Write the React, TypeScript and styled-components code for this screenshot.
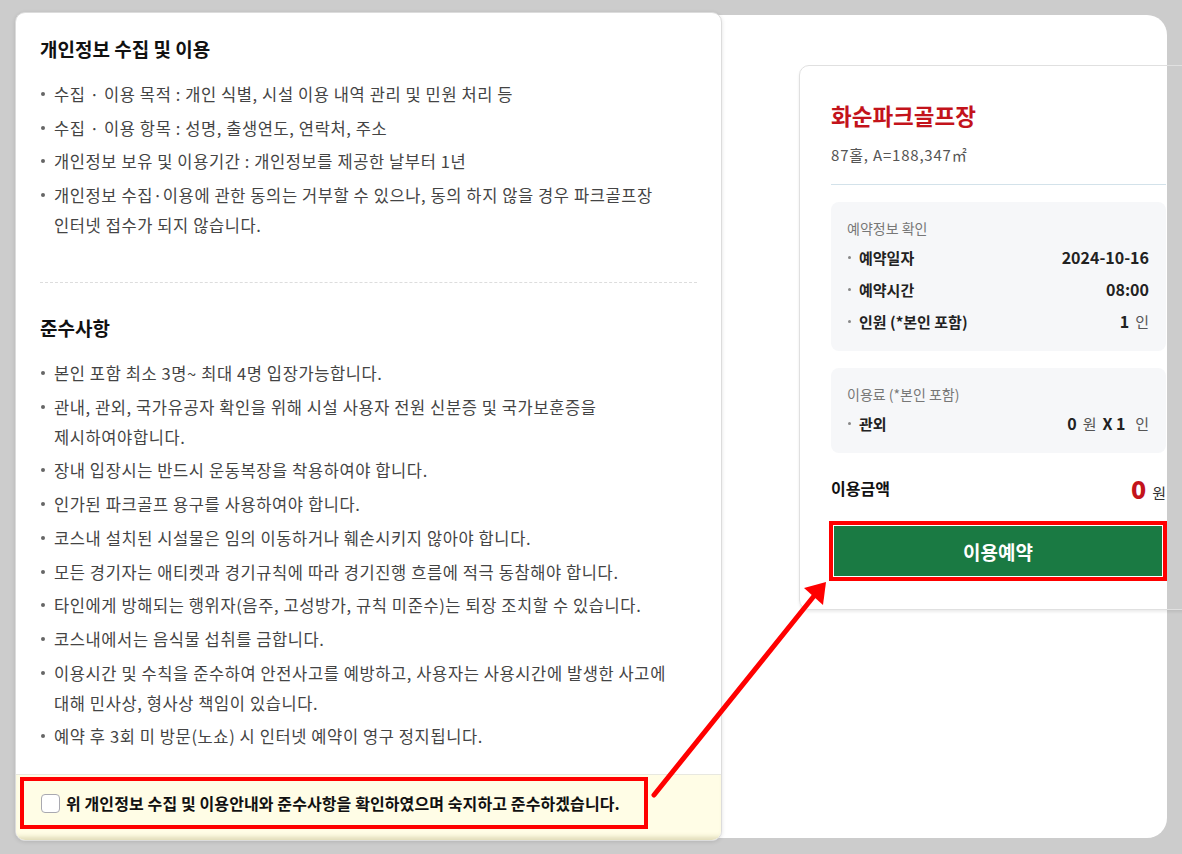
import React from 'react';
import styled, { createGlobalStyle } from 'styled-components';

const GlobalStyle = createGlobalStyle`
  html, body {
    margin: 0;
    padding: 0;
    background: #cccccc;
    overflow: hidden;
  }
  * {
    box-sizing: border-box;
  }
  body {
    font-family: 'Noto Sans CJK KR', 'Noto Sans', sans-serif;
    color: #222;
  }
`;

const Page = styled.div`
  position: relative;
  width: 1182px;
  height: 854px;
  padding: 15px 15px 16px 15px;
`;

const Panel = styled.div`
  display: flex;
  height: 823px;
  background: #ffffff;
  border-radius: 20px;
`;

const AgreeCard = styled.section`
  display: flex;
  flex-direction: column;
  width: 707px;
  height: 829px;
  margin-top: -3px;
  background: #ffffff;
  border: 1px solid #dcdcdc;
  border-radius: 10px;
  box-shadow: 0 1px 4px rgba(0, 0, 0, 0.12);
  overflow: hidden;
`;

const AgreeBody = styled.div`
  flex: 1;
  padding: 24px 24px 0 24px;
`;

const SectionTitle = styled.h3`
  margin: 0;
  font-size: 19px;
  line-height: 24px;
  font-weight: 700;
  color: #111;
`;

const List = styled.ul`
  list-style: none;
  margin: 18px 0 0;
  padding: 0;

  li {
    position: relative;
    padding-left: 14px;
    font-size: 16.5px;
    letter-spacing: 0.6px;
    line-height: 30px;
    color: #444;
    margin-bottom: 3.7px;
    white-space: pre-line;
  }

  li:last-child {
    margin-bottom: 0;
  }

  li::before {
    content: '';
    position: absolute;
    left: 1px;
    top: 13px;
    width: 4px;
    height: 4px;
    border-radius: 50%;
    background: #666;
  }
`;

const Dashed = styled.hr`
  margin: 42px 0 33px;
  border: 0;
  border-top: 1px dashed #dddddd;
`;

const AgreeFooter = styled.div`
  height: 66px;
  padding: 2px 0 0 4px;
  background: #fffde6;
  border-top: 1px solid #e8e8e0;
  box-shadow: inset 0 -6px 5px -3px rgba(140, 130, 60, 0.28);
`;

const Highlight = styled.div<{ $pad?: string }>`
  display: flex;
  align-items: center;
  border: 4px solid #ff0000;
  padding: ${(p) => p.$pad || '0'};
`;

const CheckLabel = styled.label`
  display: flex;
  align-items: center;
  gap: 6px;
  height: 44px;
  font-size: 16px;
  font-weight: 700;
  letter-spacing: 0.1px;
  color: #111;
`;

const CheckBox = styled.span`
  width: 19px;
  height: 19px;
  border: 1.5px solid #a9a9b0;
  border-radius: 4px;
  background: #fff;
`;

const RightCol = styled.div`
  flex: 1;
  padding: 50px 0 0 77px;
  min-width: 0;
`;

const ReserveCard = styled.aside`
  width: 420px;
  padding: 34px 0 28px 31px;
  border: 1px solid #e0e0e0;
  border-radius: 10px 0 0 10px;
  box-shadow: 0 2px 3px rgba(0, 0, 0, 0.08);
`;

const CardInner = styled.div`
  width: 335px;
`;

const Place = styled.h2`
  margin: 0;
  font-size: 22.5px;
  line-height: 30px;
  font-weight: 700;
  color: #c3131b;
`;

const PlaceInfo = styled.p`
  margin: 15px 0 0;
  font-size: 15px;
  line-height: 20px;
  letter-spacing: 0.8px;
  color: #555;
`;

const Divider = styled.div`
  margin: 19px 0 17px;
  border-top: 1px solid #d3e2ea;
`;

const InfoBox = styled.div<{ $mb?: number }>`
  margin-bottom: ${(p) => p.$mb ?? 0}px;
  padding: 17px 17px 14px 16px;
  background: #f6f7f9;
  border-radius: 8px;
`;

const InfoLabel = styled.div`
  font-size: 14px;
  line-height: 18px;
  color: #777;
  margin-bottom: 4px;
`;

const InfoRow = styled.div`
  display: flex;
  justify-content: space-between;
  align-items: center;
  height: 32px;
  font-size: 15px;
  font-weight: 700;
  color: #222;
`;

const RowKey = styled.span`
  display: flex;
  align-items: center;

  &::before {
    content: '';
    width: 3px;
    height: 3px;
    margin: 0 8px 0 1px;
    border-radius: 50%;
    background: #888;
  }
`;

const RowValue = styled.span`
  font-size: 16px;
`;

const Unit = styled.span<{ $last?: boolean }>`
  font-size: 15px;
  font-weight: 400;
  color: #555;
  margin: 0 ${(p) => (p.$last ? 0 : 6)}px 0 6px;
`;

const TotalRow = styled.div`
  display: flex;
  justify-content: space-between;
  align-items: center;
  height: 30px;
  margin: 20px 0 18px;
  font-size: 16px;
  font-weight: 700;
  color: #111;
`;

const TotalValue = styled.span`
  display: flex;
  align-items: baseline;
  gap: 6px;

  strong {
    font-size: 25px;
    color: #c3131b;
  }

  span {
    font-size: 15px;
    font-weight: 400;
    color: #333;
  }
`;

const ReserveButton = styled.button`
  width: 100%;
  height: 50px;
  border: 0;
  background: #1a7a43;
  color: #ffffff;
  font-family: inherit;
  font-size: 19px;
  font-weight: 700;
  cursor: pointer;
`;

const Arrow = styled.svg`
  position: absolute;
  left: 0;
  top: 0;
  pointer-events: none;
`;

const rulesA = [
  '수집 · 이용 목적 : 개인 식별, 시설 이용 내역 관리 및 민원 처리 등',
  '수집 · 이용 항목 : 성명, 출생연도, 연락처, 주소',
  '개인정보 보유 및 이용기간 : 개인정보를 제공한 날부터 1년',
  '개인정보 수집·이용에 관한 동의는 거부할 수 있으나, 동의 하지 않을 경우 파크골프장\n인터넷 접수가 되지 않습니다.',
];

const rulesB = [
  '본인 포함 최소 3명~ 최대 4명 입장가능합니다.',
  '관내, 관외, 국가유공자 확인을 위해 시설 사용자 전원 신분증 및 국가보훈증을\n제시하여야합니다.',
  '장내 입장시는 반드시 운동복장을 착용하여야 합니다.',
  '인가된 파크골프 용구를 사용하여야 합니다.',
  '코스내 설치된 시설물은 임의 이동하거나 훼손시키지 않아야 합니다.',
  '모든 경기자는 애티켓과 경기규칙에 따라 경기진행 흐름에 적극 동참해야 합니다.',
  '타인에게 방해되는 행위자(음주, 고성방가, 규칙 미준수)는 퇴장 조치할 수 있습니다.',
  '코스내에서는 음식물 섭취를 금합니다.',
  '이용시간 및 수칙을 준수하여 안전사고를 예방하고, 사용자는 사용시간에 발생한 사고에\n대해 민사상, 형사상 책임이 있습니다.',
  '예약 후 3회 미 방문(노쇼) 시 인터넷 예약이 영구 정지됩니다.',
];

export default function App() {
  return (
    <>
      <GlobalStyle />
      <Page>
        <Panel>
          <AgreeCard>
            <AgreeBody>
              <SectionTitle>개인정보 수집 및 이용</SectionTitle>
              <List>
                {rulesA.map((r) => (
                  <li key={r}>{r}</li>
                ))}
              </List>
              <Dashed />
              <SectionTitle>준수사항</SectionTitle>
              <List>
                {rulesB.map((r) => (
                  <li key={r}>{r}</li>
                ))}
              </List>
            </AgreeBody>
            <AgreeFooter>
              <Highlight $pad="0 0 0 17px" style={{ width: 628 }}>
                <CheckLabel>
                  <CheckBox />
                  위 개인정보 수집 및 이용안내와 준수사항을 확인하였으며 숙지하고 준수하겠습니다.
                </CheckLabel>
              </Highlight>
            </AgreeFooter>
          </AgreeCard>

          <RightCol>
            <ReserveCard>
              <CardInner>
                <Place>화순파크골프장</Place>
                <PlaceInfo>87홀, A=188,347㎡</PlaceInfo>
                <Divider />
                <InfoBox $mb={17}>
                  <InfoLabel>예약정보 확인</InfoLabel>
                  <InfoRow>
                    <RowKey>예약일자</RowKey>
                    <RowValue>2024-10-16</RowValue>
                  </InfoRow>
                  <InfoRow>
                    <RowKey>예약시간</RowKey>
                    <RowValue>08:00</RowValue>
                  </InfoRow>
                  <InfoRow>
                    <RowKey>인원 (*본인 포함)</RowKey>
                    <RowValue>
                      1<Unit $last>인</Unit>
                    </RowValue>
                  </InfoRow>
                </InfoBox>
                <InfoBox>
                  <InfoLabel>이용료 (*본인 포함)</InfoLabel>
                  <InfoRow>
                    <RowKey>관외</RowKey>
                    <RowValue>
                      0<Unit>원</Unit>X 1 <Unit $last>인</Unit>
                    </RowValue>
                  </InfoRow>
                </InfoBox>
                <TotalRow>
                  <span>이용금액</span>
                  <TotalValue>
                    <strong>0</strong>
                    <span>원</span>
                  </TotalValue>
                </TotalRow>
                <Highlight $pad="1px" style={{ marginLeft: -2, width: 338 }}>
                  <ReserveButton>이용예약</ReserveButton>
                </Highlight>
              </CardInner>
            </ReserveCard>
          </RightCol>
        </Panel>

        <Arrow width="1182" height="854" viewBox="0 0 1182 854">
          <line x1="654" y1="795" x2="814" y2="596" stroke="#ff0000" strokeWidth="5" strokeLinecap="round" />
          <polygon points="826,582 804,588 823,605" fill="#ff0000" />
        </Arrow>
      </Page>
    </>
  );
}
